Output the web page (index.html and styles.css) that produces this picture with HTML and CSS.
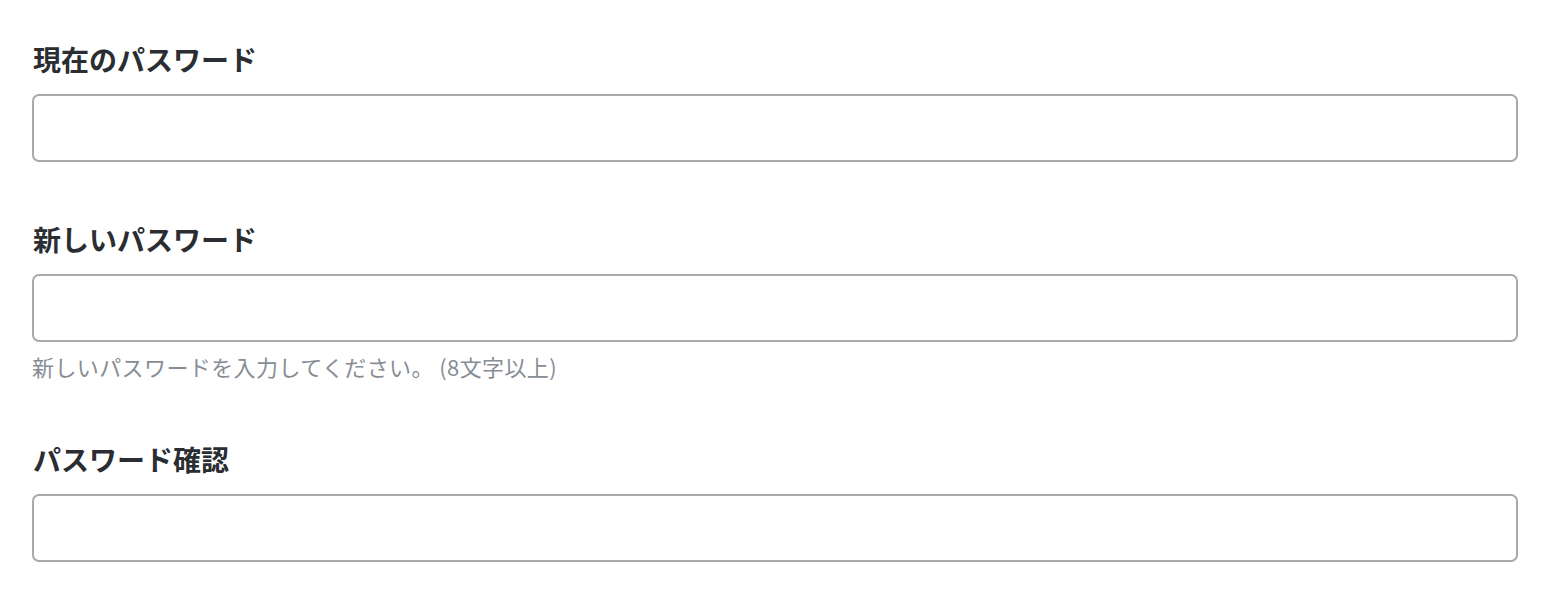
FILE: index.html
```html
<!DOCTYPE html>
<html lang="ja">
<head>
<meta charset="utf-8">
<link rel="stylesheet" href="styles.css">
</head>
<body>
<form class="form">
  <div class="group">
    <label class="label" for="current">現在のパスワード</label>
    <input class="input" id="current" type="password">
  </div>
  <div class="group">
    <label class="label" for="new">新しいパスワード</label>
    <input class="input" id="new" type="password">
    <p class="help">新しいパスワードを入力してください。 (8文字以上)</p>
  </div>
  <div class="group">
    <label class="label" for="confirm">パスワード確認</label>
    <input class="input" id="confirm" type="password">
  </div>
</form>
</body>
</html>
```

FILE: styles.css
```css
html, body {
  margin: 0;
  padding: 0;
  background: #fff;
}
body {
  font-family: "Noto Sans CJK JP", "Noto Sans", sans-serif;
  color: #212529;
}
.form {
  display: flex;
  flex-direction: column;
  gap: 57px;
  padding: 39px 32px 0 32px;
}
.group {
  display: flex;
  flex-direction: column;
}
.label {
  font-size: 28px;
  font-weight: 700;
  line-height: 40px;
  margin: 0 0 15px 1px;
  color: #2a2d31;
}
.input {
  box-sizing: border-box;
  height: 68px;
  width: 100%;
  border: 2px solid #a9a9a9;
  border-radius: 7px;
  background: #fff;
  padding: 0 14px;
  font-size: 22px;
  outline: none;
}
.help {
  margin: 8px 0 0 0;
  font-size: 22px;
  line-height: 32px;
  letter-spacing: 0.4px;
  color: #878d94;
}
```
